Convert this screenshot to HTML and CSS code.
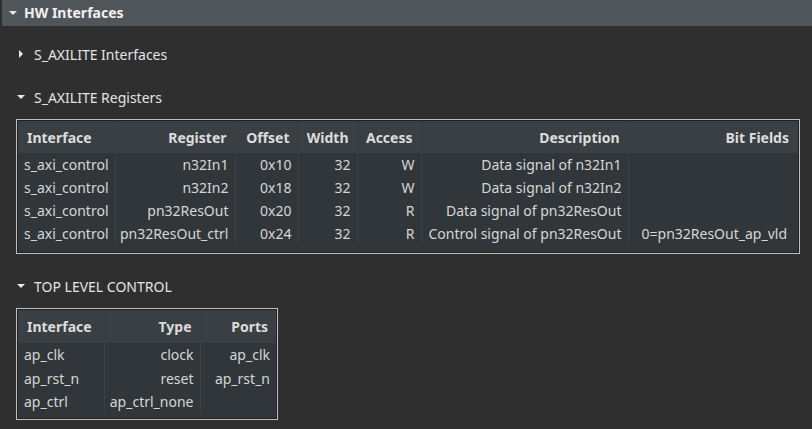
FILE: index.html
```html
<!DOCTYPE html>
<html>
<head>
<meta charset="utf-8">
<link rel="stylesheet" href="styles.css">
</head>
<body>
<div class="page">
  <div class="topbar"><span class="tri-down"></span><span class="topbar-title">HW Interfaces</span></div>

  <div class="section-title first"><span class="tri-right"></span><span>S_AXILITE Interfaces</span></div>

  <div class="section-title"><span class="tri-down"></span><span>S_AXILITE Registers</span></div>
  <div class="frame frame-regs">
    <table class="grid">
      <colgroup>
        <col style="width:97px"><col style="width:120px"><col style="width:63px"><col style="width:59px"><col style="width:64px"><col style="width:207px"><col>
      </colgroup>
      <thead>
        <tr><th class="l">Interface</th><th>Register</th><th>Offset</th><th>Width</th><th>Access</th><th>Description</th><th class="bfh">Bit Fields</th></tr>
      </thead>
      <tbody>
        <tr><td class="l">s_axi_control</td><td>n32In1</td><td>0x10</td><td>32</td><td>W</td><td>Data signal of n32In1</td><td></td></tr>
        <tr><td class="l">s_axi_control</td><td>n32In2</td><td>0x18</td><td>32</td><td>W</td><td>Data signal of n32In2</td><td></td></tr>
        <tr><td class="l">s_axi_control</td><td>pn32ResOut</td><td>0x20</td><td>32</td><td>R</td><td>Data signal of pn32ResOut</td><td></td></tr>
        <tr><td class="l">s_axi_control</td><td class="tight">pn32ResOut_ctrl</td><td>0x24</td><td>32</td><td>R</td><td class="tight">Control signal of pn32ResOut</td><td class="bf">0=pn32ResOut_ap_vld</td></tr>
      </tbody>
    </table>
    <div class="frame-fill regs-fill"></div>
  </div>

  <div class="section-title third"><span class="tri-down"></span><span>TOP LEVEL CONTROL</span></div>
  <div class="frame frame-top">
    <table class="grid grid-top">
      <colgroup>
        <col style="width:86px"><col style="width:96px"><col>
      </colgroup>
      <thead>
        <tr><th class="l">Interface</th><th>Type</th><th>Ports</th></tr>
      </thead>
      <tbody>
        <tr><td class="l">ap_clk</td><td>clock</td><td>ap_clk</td></tr>
        <tr><td class="l">ap_rst_n</td><td>reset</td><td>ap_rst_n</td></tr>
        <tr><td class="l">ap_ctrl</td><td class="tight">ap_ctrl_none</td><td></td></tr>
      </tbody>
    </table>
    <div class="frame-fill top-fill"></div>
  </div>
</div>
</body>
</html>
```

FILE: styles.css
```css
html, body {
  margin: 0;
  padding: 0;
  background: #2f2f2f;
}
body {
  font-family: "Noto Sans", "Open Sans", sans-serif;
  font-size: 14px;
  color: #dedede;
  width: 812px;
  height: 429px;
  overflow: hidden;
}
.page {
  display: flex;
  flex-direction: column;
  align-items: flex-start;
}
.topbar {
  align-self: stretch;
  margin-left: 2px;
  height: 26px;
  background: #505559;
  display: flex;
  align-items: center;
  gap: 7px;
  padding-left: 7px;
  padding-bottom: 1px;
  box-sizing: border-box;
  font-weight: bold;
  font-size: 14px;
  color: #f0f0f0;
}
.tri-down {
  width: 0;
  height: 0;
  border-left: 4px solid transparent;
  border-right: 4px solid transparent;
  border-top: 4px solid #e8e8e8;
}
.tri-right {
  width: 0;
  height: 0;
  border-top: 4px solid transparent;
  border-bottom: 4px solid transparent;
  border-left: 4px solid #e8e8e8;
  margin-left: 2px;
  margin-right: 2px;
}
.section-title {
  display: flex;
  align-items: center;
  gap: 9px;
  height: 20px;
  padding-left: 17px;
  margin-top: 23px;
  font-size: 14px;
  color: #e4e4e4;
}
.section-title.first {
  margin-top: 18px;
}
.section-title.third {
  margin-top: 22px;
}
.frame {
  margin-left: 16px;
  margin-top: 12px;
  border: 1px solid #bfbfbf;
  background: #31363a;
  box-shadow: inset 0 0 0 1px #1f2326;
  padding: 1px;
  display: flex;
  flex-direction: column;
}
.frame-regs {
  width: 780px;
}
.frame-top {
  width: 258px;
}
.regs-fill {
  height: 7px;
}
.top-fill {
  height: 4px;
}
.grid {
  border-collapse: collapse;
  table-layout: fixed;
  width: 100%;
}
.grid th {
  background: #3a3f43;
  height: 32px;
  padding: 0 8px 0 4px;
  text-align: right;
  font-weight: bold;
  color: #dcdcdc;
  border-left: 1px solid #363b3f;
  white-space: nowrap;
}
.grid th.l {
  text-align: left;
  padding-left: 9px;
  border-left: none;
}
.grid th.bfh {
  padding-right: 9px;
}
.grid td {
  height: 23px;
  padding: 0 6px 0 2px;
  text-align: right;
  color: #d6d6d6;
  border-left: 1px solid #3b4044;
  white-space: nowrap;
  overflow: hidden;
}
.grid-top th {
  height: 33px;
}
.grid-top td {
  height: 23.5px;
}
.grid td.l {
  text-align: left;
  padding-left: 6px;
  border-left: none;
}
.grid td.tight {
  padding-left: 1px;
  padding-right: 6px;
}
.grid td.bf {
  padding-right: 11px;
}
```
